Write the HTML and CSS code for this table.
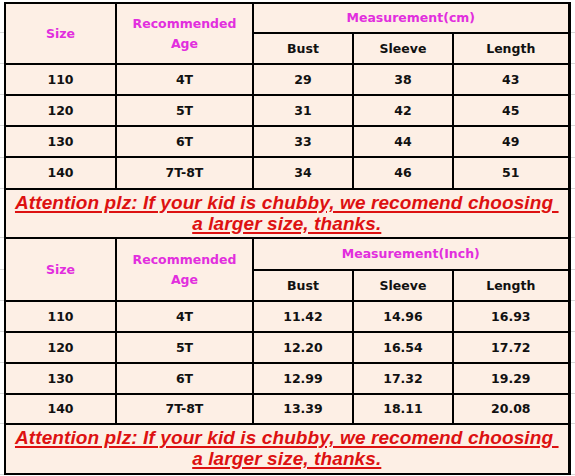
FILE: index.html
```html
<!DOCTYPE html>
<html>
<head>
<meta charset="utf-8">
<link rel="stylesheet" href="styles.css">
</head>
<body>
<div class="sheet">
<table class="chart">
  <colgroup>
    <col class="c1"><col class="c2"><col class="c3"><col class="c4"><col class="c5">
  </colgroup>
  <tr class="h1">
    <td rowspan="2" class="head">Size</td>
    <td rowspan="2" class="head">Recommended<br>Age</td>
    <td colspan="3" class="head">Measurement(cm)</td>
  </tr>
  <tr class="h2"><td>Bust</td><td>Sleeve</td><td>Length</td></tr>
  <tr class="row"><td>110</td><td>4T</td><td>29</td><td>38</td><td>43</td></tr>
  <tr class="row"><td>120</td><td>5T</td><td>31</td><td>42</td><td>45</td></tr>
  <tr class="row"><td>130</td><td>6T</td><td>33</td><td>44</td><td>49</td></tr>
  <tr class="row last"><td>140</td><td>7T-8T</td><td>34</td><td>46</td><td>51</td></tr>
  <tr class="note"><td colspan="5"><span>Attention plz: If your kid is chubby, we recomend choosing&nbsp;</span><br><span>a larger size, thanks.</span></td></tr>
  <tr class="h1 second">
    <td rowspan="2" class="head">Size</td>
    <td rowspan="2" class="head">Recommended<br>Age</td>
    <td colspan="3" class="head">Measurement(Inch)</td>
  </tr>
  <tr class="h2"><td>Bust</td><td>Sleeve</td><td>Length</td></tr>
  <tr class="row"><td>110</td><td>4T</td><td>11.42</td><td>14.96</td><td>16.93</td></tr>
  <tr class="row"><td>120</td><td>5T</td><td>12.20</td><td>16.54</td><td>17.72</td></tr>
  <tr class="row"><td>130</td><td>6T</td><td>12.99</td><td>17.32</td><td>19.29</td></tr>
  <tr class="row last2"><td>140</td><td>7T-8T</td><td>13.39</td><td>18.11</td><td>20.08</td></tr>
  <tr class="note note2"><td colspan="5"><span>Attention plz: If your kid is chubby, we recomend choosing&nbsp;</span><br><span>a larger size, thanks.</span></td></tr>
</table>
</div>
</body>
</html>
```

FILE: styles.css
```css
html, body {
  margin: 0;
  padding: 0;
  background: #ffffff;
}

.sheet {
  width: 575px;
  height: 476px;
  box-sizing: border-box;
  padding: 2px 0 0 4px;
  background-color: #ffffff;
  background-image:
    linear-gradient(#d9d9d9, #d9d9d9),
    linear-gradient(#d9d9d9, #d9d9d9),
    linear-gradient(#d9d9d9, #d9d9d9),
    linear-gradient(#d9d9d9, #d9d9d9),
    linear-gradient(#d9d9d9, #d9d9d9),
    linear-gradient(#d9d9d9, #d9d9d9),
    linear-gradient(#d9d9d9, #d9d9d9),
    linear-gradient(#d9d9d9, #d9d9d9),
    linear-gradient(#d9d9d9, #d9d9d9),
    linear-gradient(#d9d9d9, #d9d9d9),
    linear-gradient(#d9d9d9, #d9d9d9),
    linear-gradient(#d9d9d9, #d9d9d9),
    linear-gradient(#d9d9d9, #d9d9d9),
    linear-gradient(#d9d9d9, #d9d9d9);
  background-repeat: no-repeat;
  background-size: 100% 1px;
  background-position:
    0 32px, 0 63px, 0 94px, 0 125px, 0 157px, 0 188px, 0 237px,
    0 269px, 0 300px, 0 331px, 0 362px, 0 393px, 0 423px, 0 474px;
}

.chart {
  border-collapse: collapse;
  table-layout: fixed;
  width: 566px;
  background: #fdefe5;
  border-top: 2px solid #000;
  border-left: 2px solid #000;
  border-right: 3px solid #000;
  border-bottom: 2px solid #000;
  font-family: "DejaVu Sans", Verdana, sans-serif;
  font-weight: bold;
  font-size: 12.5px;
  color: #111;
}

.c1 { width: 111px; }
.c2 { width: 137px; }
.c3 { width: 100px; }
.c4 { width: 100px; }
.c5 { width: 116px; }

.chart td {
  border: 2px solid #000;
  text-align: center;
  vertical-align: middle;
  padding: 0;
  line-height: 20px;
}

.chart .head {
  color: #e22ede;
}

.h1 { height: 30px; }
.h1.second { height: 32px; }
.h2 { height: 31px; }
.row { height: 31px; }
.row.last { height: 32px; }
.row.last2 { height: 30px; }

.note { height: 49px; }
.note2 { height: 50px; }

.note td {
  font-family: "Liberation Sans", Arial, sans-serif;
  font-style: italic;
  font-weight: bold;
  font-size: 19px;
  line-height: 21px;
  color: #dd1111;
  padding-top: 1px;
  padding-bottom: 3px;
  letter-spacing: 0.1px;
}

.note span {
  text-decoration: underline;
  text-decoration-thickness: 2px;
  text-underline-offset: 2px;
}
```
